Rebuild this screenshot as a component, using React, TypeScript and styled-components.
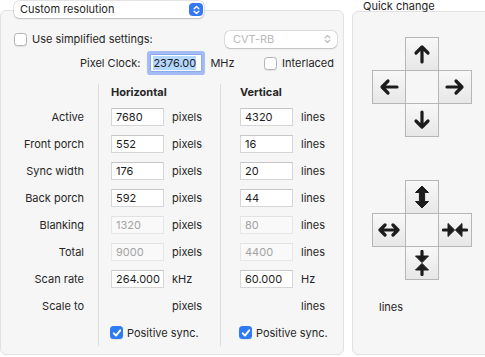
import React from 'react';
import styled, { createGlobalStyle } from 'styled-components';

const Global = createGlobalStyle`
  html, body { margin: 0; padding: 0; background: #ffffff; }
  body {
    font-family: Inter, "Noto Sans", "Liberation Sans", sans-serif;
    font-size: 11px;
    color: #262626;
    -webkit-font-smoothing: antialiased;
  }
`;

const Window = styled.div`
  width: 485px;
  height: 357px;
  overflow: hidden;
  display: flex;
  gap: 8px;
`;

const LeftColumn = styled.div`
  width: 344px;
  flex: none;
  display: flex;
  flex-direction: column;
`;

const RightColumn = styled.div`
  width: 140px;
  flex: none;
  display: flex;
  flex-direction: column;
`;

const Panel = styled.div`
  flex: 1;
  margin-bottom: 2px;
  background: #f6f6f6;
  border: 1px solid #e2e2e2;
  border-radius: 6px;
  display: flex;
  flex-direction: column;
`;

const MainPanel = styled(Panel)`
  padding-top: 18px;
`;

const PopupButton = styled.div<{ $disabled?: boolean }>`
  position: relative;
  z-index: 1;
  box-sizing: border-box;
  height: 17px;
  display: flex;
  align-items: center;
  justify-content: space-between;
  padding-left: 6px;
  padding-right: 1px;
  background: #ffffff;
  border-radius: 5px;
  box-shadow: 0 0 0 0.5px rgba(0, 0, 0, 0.16), 0 0.5px 1.5px rgba(0, 0, 0, 0.16);
  color: ${(p) => (p.$disabled ? '#b9b9b9' : '#262626')};
  line-height: 17px;
`;

const TitlePopup = styled(PopupButton)`
  width: 190px;
  margin: 1px 0 -8px 14px;
`;

const CvtPopup = styled(PopupButton)`
  width: 112px;
  padding-left: 8px;
  padding-right: 6px;
`;

const Stepper = styled.span`
  width: 14px;
  height: 13px;
  border-radius: 4px;
  background: #3478f6;
  display: flex;
  align-items: center;
  justify-content: center;
`;

const Row = styled.div`
  display: flex;
  align-items: center;
`;

const TopRow = styled(Row)`
  height: 20px;
  padding-left: 13px;
  padding-right: 6px;
  justify-content: space-between;
`;

const ClockRow = styled(Row)`
  height: 22px;
  margin-top: 3px;
  padding-left: 79px;
  padding-right: 9px;
`;

const CheckLabel = styled.label`
  display: flex;
  align-items: center;
  gap: 5px;
  white-space: nowrap;
`;

const CheckBox = styled.span<{ $checked?: boolean }>`
  box-sizing: border-box;
  width: 13px;
  height: 13px;
  border-radius: 3.5px;
  flex: none;
  display: flex;
  align-items: center;
  justify-content: center;
  background: ${(p) => (p.$checked ? '#2f7bf6' : '#ffffff')};
  border: ${(p) => (p.$checked ? 'none' : '1px solid #b4b4b4')};
  box-shadow: 0 0.5px 1px rgba(0, 0, 0, 0.08);
`;

const Field = styled.div<{ $disabled?: boolean }>`
  box-sizing: border-box;
  width: 53px;
  height: 18px;
  flex: none;
  padding-left: 4px;
  line-height: 17px;
  background: ${(p) => (p.$disabled ? '#f9f9f9' : '#ffffff')};
  border: 1px solid ${(p) => (p.$disabled ? '#e6e6e6' : '#d6d6d6')};
  border-top-color: ${(p) => (p.$disabled ? '#e2e2e2' : '#c6c6c6')};
  color: ${(p) => (p.$disabled ? '#a3a3a3' : '#1d1d1d')};
  white-space: nowrap;
  overflow: hidden;
`;

const FieldSpacer = styled.div`
  width: 53px;
  flex: none;
`;

const ClockField = styled(Field)`
  width: 52px;
  margin-left: 10px;
  padding-left: 2px;
  border-color: #8da9ee;
  box-shadow: 0 0 0 3px #a3bcf4;
  border-radius: 1px;
`;

const Selection = styled.span`
  background: #b3d7ff;
`;

const Unit = styled.span`
  margin-left: 8px;
  white-space: nowrap;
`;

const Interlaced = styled(CheckLabel)`
  margin-left: auto;
`;

const Columns = styled.div`
  margin-top: 10px;
  height: 252px;
  display: grid;
  grid-template-columns: 97px 122px 1fr;
`;

const Column = styled.div<{ $inset?: number; $divider?: boolean }>`
  display: flex;
  flex-direction: column;
  padding-left: ${(p) => p.$inset ?? 0}px;
  border-left: ${(p) => (p.$divider ? '1px solid #dddddd' : 'none')};
`;

const Header = styled.div`
  height: 19px;
  line-height: 16px;
  font-weight: 700;
  flex: none;
`;

const GridRow = styled(Row)`
  height: 27px;
  flex: none;
`;

const LabelRow = styled(GridRow)`
  justify-content: flex-end;
  padding-right: 14px;
  white-space: nowrap;
`;

const SyncLabel = styled(CheckLabel)`
  margin-left: -1px;
  gap: 4px;
`;

const QuickTitle = styled.div`
  height: 11px;
  line-height: 13px;
  padding-left: 11px;
  white-space: nowrap;
  position: relative;
  z-index: 1;
`;

const CrossGrid = styled.div<{ $top: number }>`
  display: grid;
  grid-template-columns: repeat(3, 33px);
  grid-template-rows: repeat(3, 33px);
  margin-top: ${(p) => p.$top}px;
  margin-left: 19px;
`;

const CrossCell = styled.div<{ $col: number; $row: number }>`
  grid-column: ${(p) => p.$col};
  grid-row: ${(p) => p.$row};
  margin-right: -1px;
  margin-bottom: -1px;
  border: 1px solid #b6b6b6;
  background: linear-gradient(#f8f8f8, #e7e7e7);
  display: flex;
  align-items: center;
  justify-content: center;
  color: #1c1c1c;
`;

const QuickUnit = styled.div`
  margin-top: 20px;
  margin-left: 26px;
  line-height: 16px;
`;

const Check = ({ checked }: { checked?: boolean }) => (
  <CheckBox $checked={checked}>
    {checked && (
      <svg width="10" height="10" viewBox="0 0 10 10">
        <path d="M1.8 5.3 L4 7.6 L8.2 2.3" fill="none" stroke="#fff" strokeWidth="1.9" strokeLinecap="round" strokeLinejoin="round" />
      </svg>
    )}
  </CheckBox>
);

const Chevrons = ({ color, w = 7, h = 10 }: { color: string; w?: number; h?: number }) => (
  <svg width={w} height={h} viewBox="0 0 7 10">
    <path d="M1.2 3.8 L3.5 1.5 L5.8 3.8 M1.2 6.2 L3.5 8.5 L5.8 6.2" fill="none" stroke={color} strokeWidth="1.4" strokeLinecap="round" strokeLinejoin="round" />
  </svg>
);

const Arrow = ({ rot }: { rot: number }) => (
  <svg width="20" height="20" viewBox="0 0 20 20" style={{ transform: `rotate(${rot}deg)` }}>
    <path d="M10 18 V3.2 M4 9 L10 3 L16 9" fill="none" stroke="currentColor" strokeWidth="3.2" strokeLinecap="round" strokeLinejoin="round" />
  </svg>
);

const Expand = ({ rot }: { rot: number }) => (
  <svg width="24" height="24" viewBox="0 0 24 24" style={{ transform: `rotate(${rot}deg)` }}>
    <path d="M12 1 L18.5 7.5 L14.6 7.5 L14.6 16.5 L18.5 16.5 L12 23 L5.5 16.5 L9.4 16.5 L9.4 7.5 L5.5 7.5 Z" fill="currentColor" stroke="currentColor" strokeWidth="1" strokeLinejoin="round" />
  </svg>
);

const ExpandH = () => (
  <svg width="24" height="14" viewBox="0 0 24 14">
    <path d="M3 7 H21 M8 2 L3 7 L8 12 M16 2 L21 7 L16 12" fill="none" stroke="currentColor" strokeWidth="3.2" strokeLinecap="round" strokeLinejoin="round" />
  </svg>
);

const Compress = ({ rot }: { rot: number }) => (
  <svg width="26" height="26" viewBox="0 0 26 26" style={{ transform: `rotate(${rot}deg)` }}>
    <path d="M1.5 13 H8 M24.5 13 H18" fill="none" stroke="currentColor" strokeWidth="3.2" strokeLinecap="round" />
    <path d="M6 6.5 L12.6 13 L6 19.5 Z M20 6.5 L13.4 13 L20 19.5 Z" fill="currentColor" stroke="currentColor" strokeWidth="1" strokeLinejoin="round" />
  </svg>
);

type Line = {
  label: string;
  h: string | null;
  hu: string;
  v: string | null;
  vu: string;
  disabled?: boolean;
};

const lines: Line[] = [
  { label: 'Active', h: '7680', hu: 'pixels', v: '4320', vu: 'lines' },
  { label: 'Front porch', h: '552', hu: 'pixels', v: '16', vu: 'lines' },
  { label: 'Sync width', h: '176', hu: 'pixels', v: '20', vu: 'lines' },
  { label: 'Back porch', h: '592', hu: 'pixels', v: '44', vu: 'lines' },
  { label: 'Blanking', h: '1320', hu: 'pixels', v: '80', vu: 'lines', disabled: true },
  { label: 'Total', h: '9000', hu: 'pixels', v: '4400', vu: 'lines', disabled: true },
  { label: 'Scan rate', h: '264.000', hu: 'kHz', v: '60.000', vu: 'Hz' },
  { label: 'Scale to', h: null, hu: 'pixels', v: null, vu: 'lines' },
];

const ValueColumn = ({ title, side, inset }: { title: string; side: 'h' | 'v'; inset: number }) => (
  <Column $inset={inset} $divider>
    <Header>{title}</Header>
    {lines.map((l) => {
      const value = side === 'h' ? l.h : l.v;
      const unit = side === 'h' ? l.hu : l.vu;
      return (
        <GridRow key={l.label}>
          {value === null ? <FieldSpacer /> : <Field $disabled={l.disabled}>{value}</Field>}
          <Unit>{unit}</Unit>
        </GridRow>
      );
    })}
    <GridRow>
      <SyncLabel>
        <Check checked />
        Positive sync.
      </SyncLabel>
    </GridRow>
  </Column>
);

export default function App() {
  return (
    <>
      <Global />
      <Window>
        <LeftColumn>
          <TitlePopup>
            <span>Custom resolution</span>
            <Stepper>
              <Chevrons color="#ffffff" w={7} h={10} />
            </Stepper>
          </TitlePopup>
          <MainPanel>
            <TopRow>
              <CheckLabel>
                <Check />
                Use simplified settings:
              </CheckLabel>
              <CvtPopup $disabled>
                <span>CVT-RB</span>
                <Chevrons color="#c2c2c2" />
              </CvtPopup>
            </TopRow>
            <ClockRow>
              <span>Pixel Clock:</span>
              <ClockField>
                <Selection>2376.00</Selection>
              </ClockField>
              <Unit>MHz</Unit>
              <Interlaced>
                <Check />
                Interlaced
              </Interlaced>
            </ClockRow>
            <Columns>
              <Column>
                <Header />
                {lines.map((l) => (
                  <LabelRow key={l.label}>{l.label}</LabelRow>
                ))}
              </Column>
              <ValueColumn title="Horizontal" side="h" inset={12} />
              <ValueColumn title="Vertical" side="v" inset={19} />
            </Columns>
          </MainPanel>
        </LeftColumn>
        <RightColumn>
          <QuickTitle>Quick change</QuickTitle>
          <Panel>
            <CrossGrid $top={25}>
              <CrossCell $col={2} $row={1}><Arrow rot={0} /></CrossCell>
              <CrossCell $col={1} $row={2}><Arrow rot={-90} /></CrossCell>
              <CrossCell $col={3} $row={2}><Arrow rot={90} /></CrossCell>
              <CrossCell $col={2} $row={3}><Arrow rot={180} /></CrossCell>
            </CrossGrid>
            <CrossGrid $top={44}>
              <CrossCell $col={2} $row={1}><Expand rot={0} /></CrossCell>
              <CrossCell $col={1} $row={2}><ExpandH /></CrossCell>
              <CrossCell $col={3} $row={2}><Compress rot={0} /></CrossCell>
              <CrossCell $col={2} $row={3}><Compress rot={90} /></CrossCell>
            </CrossGrid>
            <QuickUnit>lines</QuickUnit>
          </Panel>
        </RightColumn>
      </Window>
    </>
  );
}
